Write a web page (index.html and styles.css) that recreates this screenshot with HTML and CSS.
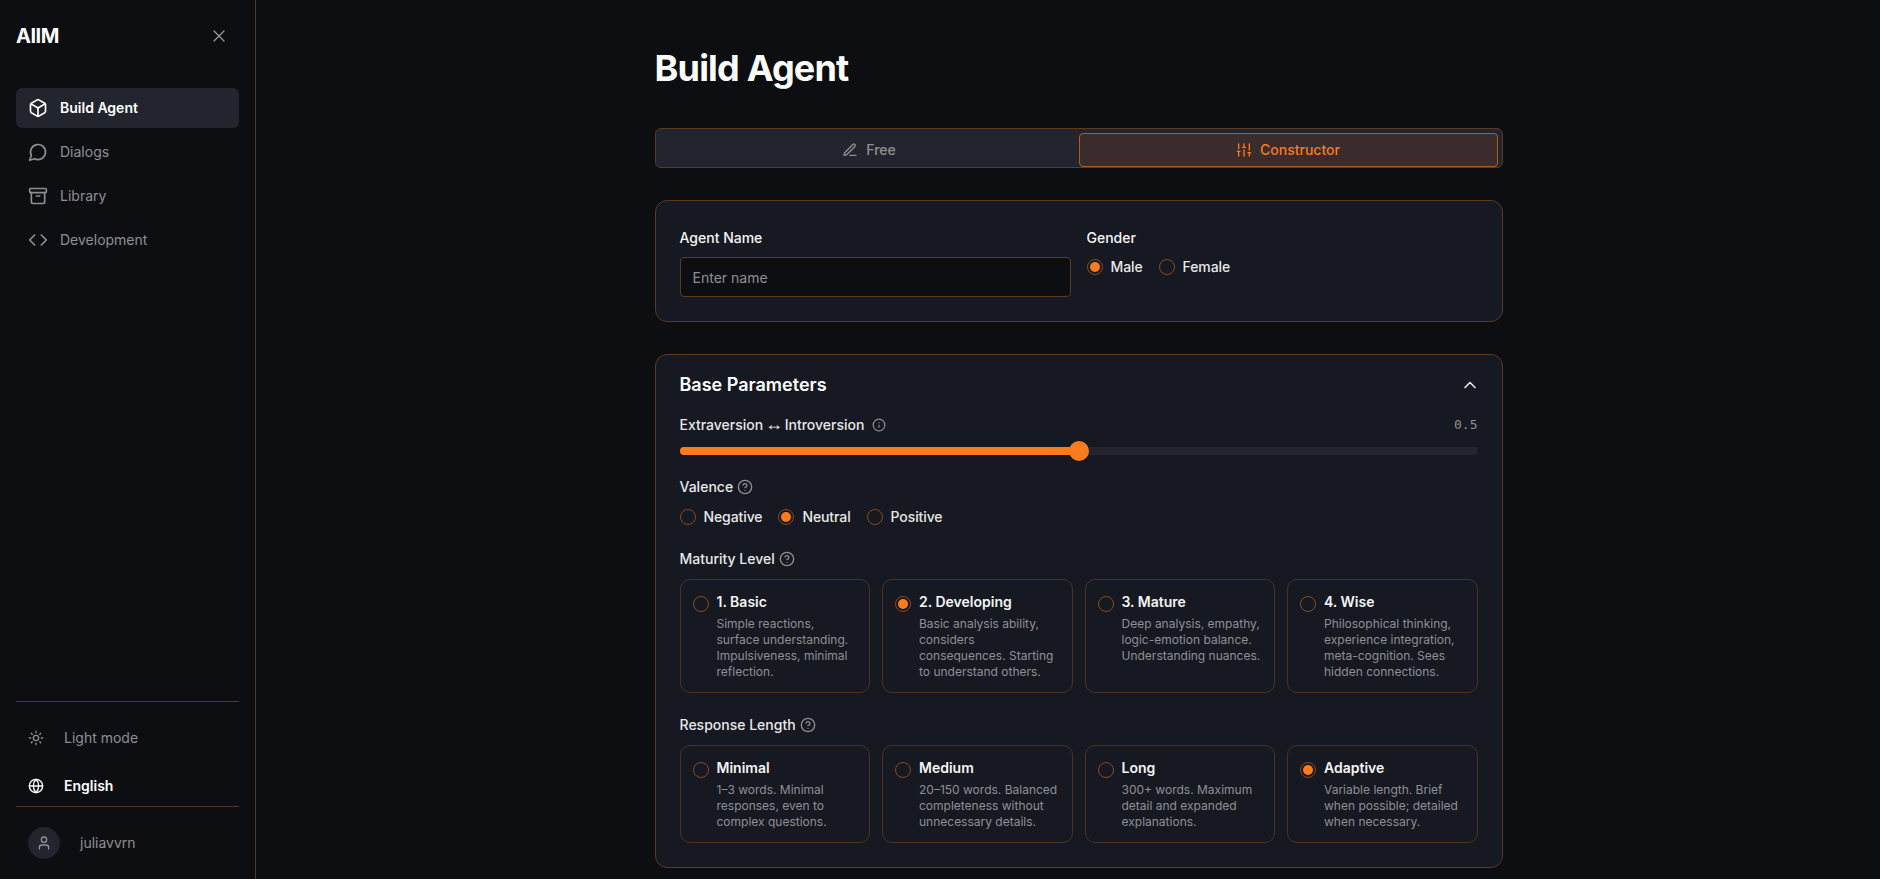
FILE: index.html
```html
<!DOCTYPE html>
<html lang="en">
<head>
    <meta charset="UTF-8">
    <title>Build Agent</title>
    <link rel="stylesheet" href="styles.css">
</head>
<body>
    <svg class="icon-defs" xmlns="http://www.w3.org/2000/svg">
        <symbol id="i-box" viewBox="0 0 24 24"><path d="M21 8a2 2 0 0 0-1-1.73l-7-4a2 2 0 0 0-2 0l-7 4A2 2 0 0 0 3 8v8a2 2 0 0 0 1 1.73l7 4a2 2 0 0 0 2 0l7-4A2 2 0 0 0 21 16Z"/><path d="m3.3 7 8.7 5 8.7-5"/><path d="M12 22V12"/></symbol>
        <symbol id="i-message" viewBox="0 0 24 24"><path d="M7.9 20A9 9 0 1 0 4 16.1L2 22Z"/></symbol>
        <symbol id="i-archive" viewBox="0 0 24 24"><rect x="2" y="3" width="20" height="5" rx="1"/><path d="M4 8v11a2 2 0 0 0 2 2h12a2 2 0 0 0 2-2V8"/><path d="M10 12h4"/></symbol>
        <symbol id="i-code" viewBox="0 0 24 24"><path d="m16 18 6-6-6-6"/><path d="m8 6-6 6 6 6"/></symbol>
        <symbol id="i-sun" viewBox="0 0 24 24"><circle cx="12" cy="12" r="4"/><path d="M12 2v2"/><path d="M12 20v2"/><path d="m4.93 4.93 1.41 1.41"/><path d="m17.66 17.66 1.41 1.41"/><path d="M2 12h2"/><path d="M20 12h2"/><path d="m6.34 17.66-1.41 1.41"/><path d="m19.07 4.93-1.41 1.41"/></symbol>
        <symbol id="i-globe" viewBox="0 0 24 24"><circle cx="12" cy="12" r="10"/><path d="M12 2a14.5 14.5 0 0 0 0 20 14.5 14.5 0 0 0 0-20"/><path d="M2 12h20"/></symbol>
        <symbol id="i-user" viewBox="0 0 24 24"><path d="M19 21v-2a4 4 0 0 0-4-4H9a4 4 0 0 0-4 4v2"/><circle cx="12" cy="7" r="4"/></symbol>
        <symbol id="i-x" viewBox="0 0 24 24"><path d="M18 6 6 18"/><path d="m6 6 12 12"/></symbol>
        <symbol id="i-pen" viewBox="0 0 24 24"><path d="M12 20h9"/><path d="M16.376 3.622a1 1 0 0 1 3.002 3.002L7.368 18.635a2 2 0 0 1-.855.506l-2.872.838a.5.5 0 0 1-.62-.62l.838-2.872a2 2 0 0 1 .506-.854z"/></symbol>
        <symbol id="i-sliders" viewBox="0 0 24 24"><path d="M4 21v-7"/><path d="M4 10V3"/><path d="M12 21v-9"/><path d="M12 8V3"/><path d="M20 21v-5"/><path d="M20 12V3"/><path d="M2 14h4"/><path d="M10 8h4"/><path d="M18 16h4"/></symbol>
        <symbol id="i-chevron" viewBox="0 0 24 24"><path d="m18 15-6-6-6 6"/></symbol>
        <symbol id="i-info" viewBox="0 0 24 24"><circle cx="12" cy="12" r="10"/><path d="M12 16v-4"/><path d="M12 8h.01"/></symbol>
        <symbol id="i-help" viewBox="0 0 24 24"><circle cx="12" cy="12" r="10"/><path d="M9.09 9a3 3 0 0 1 5.83 1c0 2-3 3-3 3"/><path d="M12 17h.01"/></symbol>
    </svg>

    <div class="app">
        <aside class="sidebar">
            <div class="side-head">
                <span class="logo">AIIM</span>
                <svg class="icon close-icon"><use href="#i-x"/></svg>
            </div>
            <nav class="side-nav">
                <a class="nav-item current"><svg class="icon nav-icon"><use href="#i-box"/></svg>Build Agent</a>
                <a class="nav-item"><svg class="icon nav-icon"><use href="#i-message"/></svg>Dialogs</a>
                <a class="nav-item"><svg class="icon nav-icon"><use href="#i-archive"/></svg>Library</a>
                <a class="nav-item"><svg class="icon nav-icon"><use href="#i-code"/></svg>Development</a>
            </nav>
            <div class="side-settings">
                <div class="setting"><svg class="icon"><use href="#i-sun"/></svg>Light mode</div>
                <div class="setting lang"><svg class="icon"><use href="#i-globe"/></svg>English</div>
            </div>
            <div class="side-user">
                <span class="avatar"><svg class="icon"><use href="#i-user"/></svg></span>
                <span>juliavvrn</span>
            </div>
        </aside>

        <main class="main">
            <div class="content">
                <h1 class="page-title">Build Agent</h1>

                <div class="mode-tabs">
                    <button type="button" class="mode-tab"><svg class="icon"><use href="#i-pen"/></svg>Free</button>
                    <button type="button" class="mode-tab active"><svg class="icon"><use href="#i-sliders"/></svg>Constructor</button>
                </div>

                <section class="card identity">
                    <div>
                        <label class="field-label" for="agent-name">Agent Name</label>
                        <input type="text" id="agent-name" class="text-input" placeholder="Enter name">
                    </div>
                    <div>
                        <div class="field-label">Gender</div>
                        <div class="radio-row">
                            <span class="radio-option"><span class="radio on"></span>Male</span>
                            <span class="radio-option"><span class="radio"></span>Female</span>
                        </div>
                    </div>
                </section>

                <section class="card params">
                    <div class="params-head">
                        <h2>Base Parameters</h2>
                        <svg class="icon chevron"><use href="#i-chevron"/></svg>
                    </div>

                    <div class="slider-head">
                        <span class="field-title"><span>Extraversion <span class="arrow">↔</span> Introversion</span> <svg class="icon info-icon"><use href="#i-info"/></svg></span>
                        <span class="slider-value">0.5</span>
                    </div>
                    <div class="slider">
                        <div class="slider-fill" style="width: 50%"></div>
                        <div class="slider-thumb" style="left: 50%"></div>
                    </div>

                    <div class="field-title group-title">Valence <svg class="icon help-icon"><use href="#i-help"/></svg></div>
                    <div class="radio-row">
                        <span class="radio-option"><span class="radio"></span>Negative</span>
                        <span class="radio-option"><span class="radio on"></span>Neutral</span>
                        <span class="radio-option"><span class="radio"></span>Positive</span>
                    </div>

                    <div class="field-title group-title">Maturity Level <svg class="icon help-icon"><use href="#i-help"/></svg></div>
                    <div class="choice-grid">
                        <div class="choice">
                            <span class="radio"></span>
                            <div><div class="choice-name">1. Basic</div><p>Simple reactions, surface understanding. Impulsiveness, minimal reflection.</p></div>
                        </div>
                        <div class="choice">
                            <span class="radio on"></span>
                            <div><div class="choice-name">2. Developing</div><p>Basic analysis ability, considers consequences. Starting to understand others.</p></div>
                        </div>
                        <div class="choice">
                            <span class="radio"></span>
                            <div><div class="choice-name">3. Mature</div><p>Deep analysis, empathy, logic-emotion balance. Understanding nuances.</p></div>
                        </div>
                        <div class="choice">
                            <span class="radio"></span>
                            <div><div class="choice-name">4. Wise</div><p>Philosophical thinking, experience integration, meta-cognition. Sees hidden connections.</p></div>
                        </div>
                    </div>

                    <div class="field-title group-title">Response Length <svg class="icon help-icon"><use href="#i-help"/></svg></div>
                    <div class="choice-grid">
                        <div class="choice">
                            <span class="radio"></span>
                            <div><div class="choice-name">Minimal</div><p>1–3 words. Minimal responses, even to complex questions.</p></div>
                        </div>
                        <div class="choice">
                            <span class="radio"></span>
                            <div><div class="choice-name">Medium</div><p>20–150 words. Balanced completeness without unnecessary details.</p></div>
                        </div>
                        <div class="choice">
                            <span class="radio"></span>
                            <div><div class="choice-name">Long</div><p>300+ words. Maximum detail and expanded explanations.</p></div>
                        </div>
                        <div class="choice">
                            <span class="radio on"></span>
                            <div><div class="choice-name">Adaptive</div><p>Variable length. Brief when possible; detailed when necessary.</p></div>
                        </div>
                    </div>
                </section>
            </div>
        </main>
    </div>
</body>
</html>
```

FILE: styles.css
```css
* {
    box-sizing: border-box;
}
body {
    margin: 0;
    background-color: #0d0e12;
    color: #f5f5f5;
    font-family: Inter, "Noto Sans", sans-serif;
    font-size: 14px;
    line-height: 20px;
}
.icon-defs {
    display: none;
}
.icon {
    width: 16px;
    height: 16px;
    flex-shrink: 0;
    fill: none;
    stroke: currentColor;
    stroke-width: 2;
    stroke-linecap: round;
    stroke-linejoin: round;
}
.app {
    display: flex;
    height: 100vh;
    overflow: hidden;
}

/* sidebar */
.sidebar {
    display: flex;
    flex-direction: column;
    width: 256px;
    flex-shrink: 0;
    padding: 0 16px;
    border-right: 1px solid #4f3a2a;
}
.side-head {
    display: flex;
    align-items: center;
    justify-content: space-between;
    height: 72px;
    padding-right: 10px;
}
.logo {
    font-size: 20px;
    line-height: 28px;
    font-weight: 700;
    letter-spacing: -0.5px;
    color: #fff;
}
.close-icon {
    width: 20px;
    height: 20px;
    stroke-width: 1.5;
    color: #9a9a9e;
}
.side-nav {
    display: flex;
    flex-direction: column;
    gap: 4px;
    padding-top: 16px;
}
.nav-item {
    display: flex;
    align-items: center;
    gap: 12px;
    height: 40px;
    padding: 0 12px;
    border-radius: 6px;
    color: #8f8f93;
}
.nav-item.current {
    background-color: #22252e;
    color: #fff;
    font-weight: 600;
}
.nav-icon {
    width: 20px;
    height: 20px;
}
.side-settings {
    display: flex;
    flex-direction: column;
    gap: 8px;
    margin-top: auto;
    padding-top: 16px;
    border-top: 1px solid #4f3a2a;
}
.setting {
    display: flex;
    align-items: center;
    gap: 20px;
    height: 40px;
    padding: 0 12px;
    color: #8f8f93;
}
.setting.lang {
    color: #fff;
    font-weight: 600;
}
.side-user {
    display: flex;
    align-items: center;
    gap: 20px;
    padding: 20px 12px;
    border-top: 1px solid #4f3a2a;
    color: #8f8f93;
}
.avatar {
    display: flex;
    align-items: center;
    justify-content: center;
    width: 32px;
    height: 32px;
    border-radius: 50%;
    background-color: #22252e;
}

/* main column */
.main {
    flex: 1;
    padding: 48px 0 0 21px;
}
.content {
    width: 848px;
    margin: 0 auto;
}
.page-title {
    margin: 0 0 40px;
    font-size: 36px;
    line-height: 40px;
    font-weight: 700;
    letter-spacing: -0.8px;
    color: #fff;
}
.mode-tabs {
    display: grid;
    grid-template-columns: 1fr 1fr;
    height: 40px;
    padding: 4px 4px 0;
    margin-bottom: 32px;
    background-color: #22252e;
    border: 1px solid #5a3a22;
    border-radius: 6px;
}
.mode-tab {
    display: flex;
    align-items: center;
    justify-content: center;
    gap: 8px;
    height: 34px;
    padding: 0;
    border: 1px solid transparent;
    border-radius: 4px;
    background: none;
    color: #8f8f93;
    font: inherit;
    font-weight: 500;
}
.mode-tab.active {
    background-color: #3a2c2c;
    border-color: #b05a20;
    color: #f97a1f;
}
.card {
    background-color: #161922;
    border: 1px solid #5a3a22;
    border-radius: 12px;
}
.identity {
    display: grid;
    grid-template-columns: 1fr 1fr;
    gap: 16px;
    padding: 24px;
    margin-bottom: 32px;
}
.field-label {
    display: block;
    margin: 3px 0 9px;
    font-weight: 500;
}
.text-input {
    display: block;
    width: 100%;
    height: 40px;
    padding: 0 12px;
    background-color: #0d0e12;
    border: 1px solid #5a3a22;
    border-radius: 4px;
    color: #f5f5f5;
    font: inherit;
}
.text-input::placeholder {
    color: #8f8f93;
}
.radio-row {
    display: flex;
    gap: 16px;
}
.radio-option {
    display: flex;
    align-items: center;
    gap: 8px;
    font-weight: 500;
    letter-spacing: -0.1px;
    color: #e8e8e8;
}
.radio {
    display: flex;
    align-items: center;
    justify-content: center;
    width: 16px;
    height: 16px;
    flex-shrink: 0;
    border: 1px solid #8a4a1c;
    border-radius: 50%;
}
.radio.on::after {
    content: "";
    width: 10px;
    height: 10px;
    border-radius: 50%;
    background-color: #fb7c1f;
}

/* base parameters */
.params {
    padding: 16px 24px 24px;
}
.params-head {
    display: flex;
    align-items: center;
    justify-content: space-between;
    margin-bottom: 16px;
}
.params-head h2 {
    margin: 0;
    font-size: 18px;
    line-height: 28px;
    font-weight: 600;
    color: #fff;
}
.chevron {
    width: 20px;
    height: 20px;
    margin-right: -2px;
    color: #e8e8e8;
}
.field-title {
    display: flex;
    align-items: center;
    gap: 4px;
    font-weight: 500;
    color: #e8e8e8;
}
.arrow {
    margin: 0 -2px;
    font-family: "Liberation Sans", sans-serif;
    font-size: 18px;
    line-height: 1;
}
.slider-head {
    display: flex;
    align-items: center;
    justify-content: space-between;
    margin-bottom: 12px;
}
.info-icon {
    width: 14px;
    height: 14px;
    margin-left: 4px;
    color: #8f8f93;
}
.help-icon {
    color: #8f8f93;
}
.slider-value {
    font-family: "DejaVu Sans Mono", monospace;
    font-size: 13px;
    color: #8f8f93;
}
.slider {
    position: relative;
    height: 8px;
    background-color: #22252e;
    border-radius: 4px;
}
.slider-fill {
    height: 100%;
    background-color: #fb7c1f;
    border-radius: 4px 0 0 4px;
}
.slider-thumb {
    position: absolute;
    top: -6px;
    width: 20px;
    height: 20px;
    margin-left: -10px;
    background-color: #fb7c1f;
    border-radius: 50%;
}
.group-title {
    margin-top: 22px;
    margin-bottom: 10px;
}
.choice-grid {
    display: grid;
    grid-template-columns: repeat(4, 1fr);
    gap: 12px;
}
.choice {
    display: flex;
    gap: 8px;
    padding: 12px;
    border: 1px solid #4a3222;
    border-radius: 10px;
}
.choice .radio {
    margin-top: 4px;
}
.choice-name {
    font-weight: 600;
    color: #f5f5f5;
}
.choice p {
    margin: 4px 0 0;
    font-size: 12px;
    line-height: 16px;
    color: #8f8f93;
}
```
